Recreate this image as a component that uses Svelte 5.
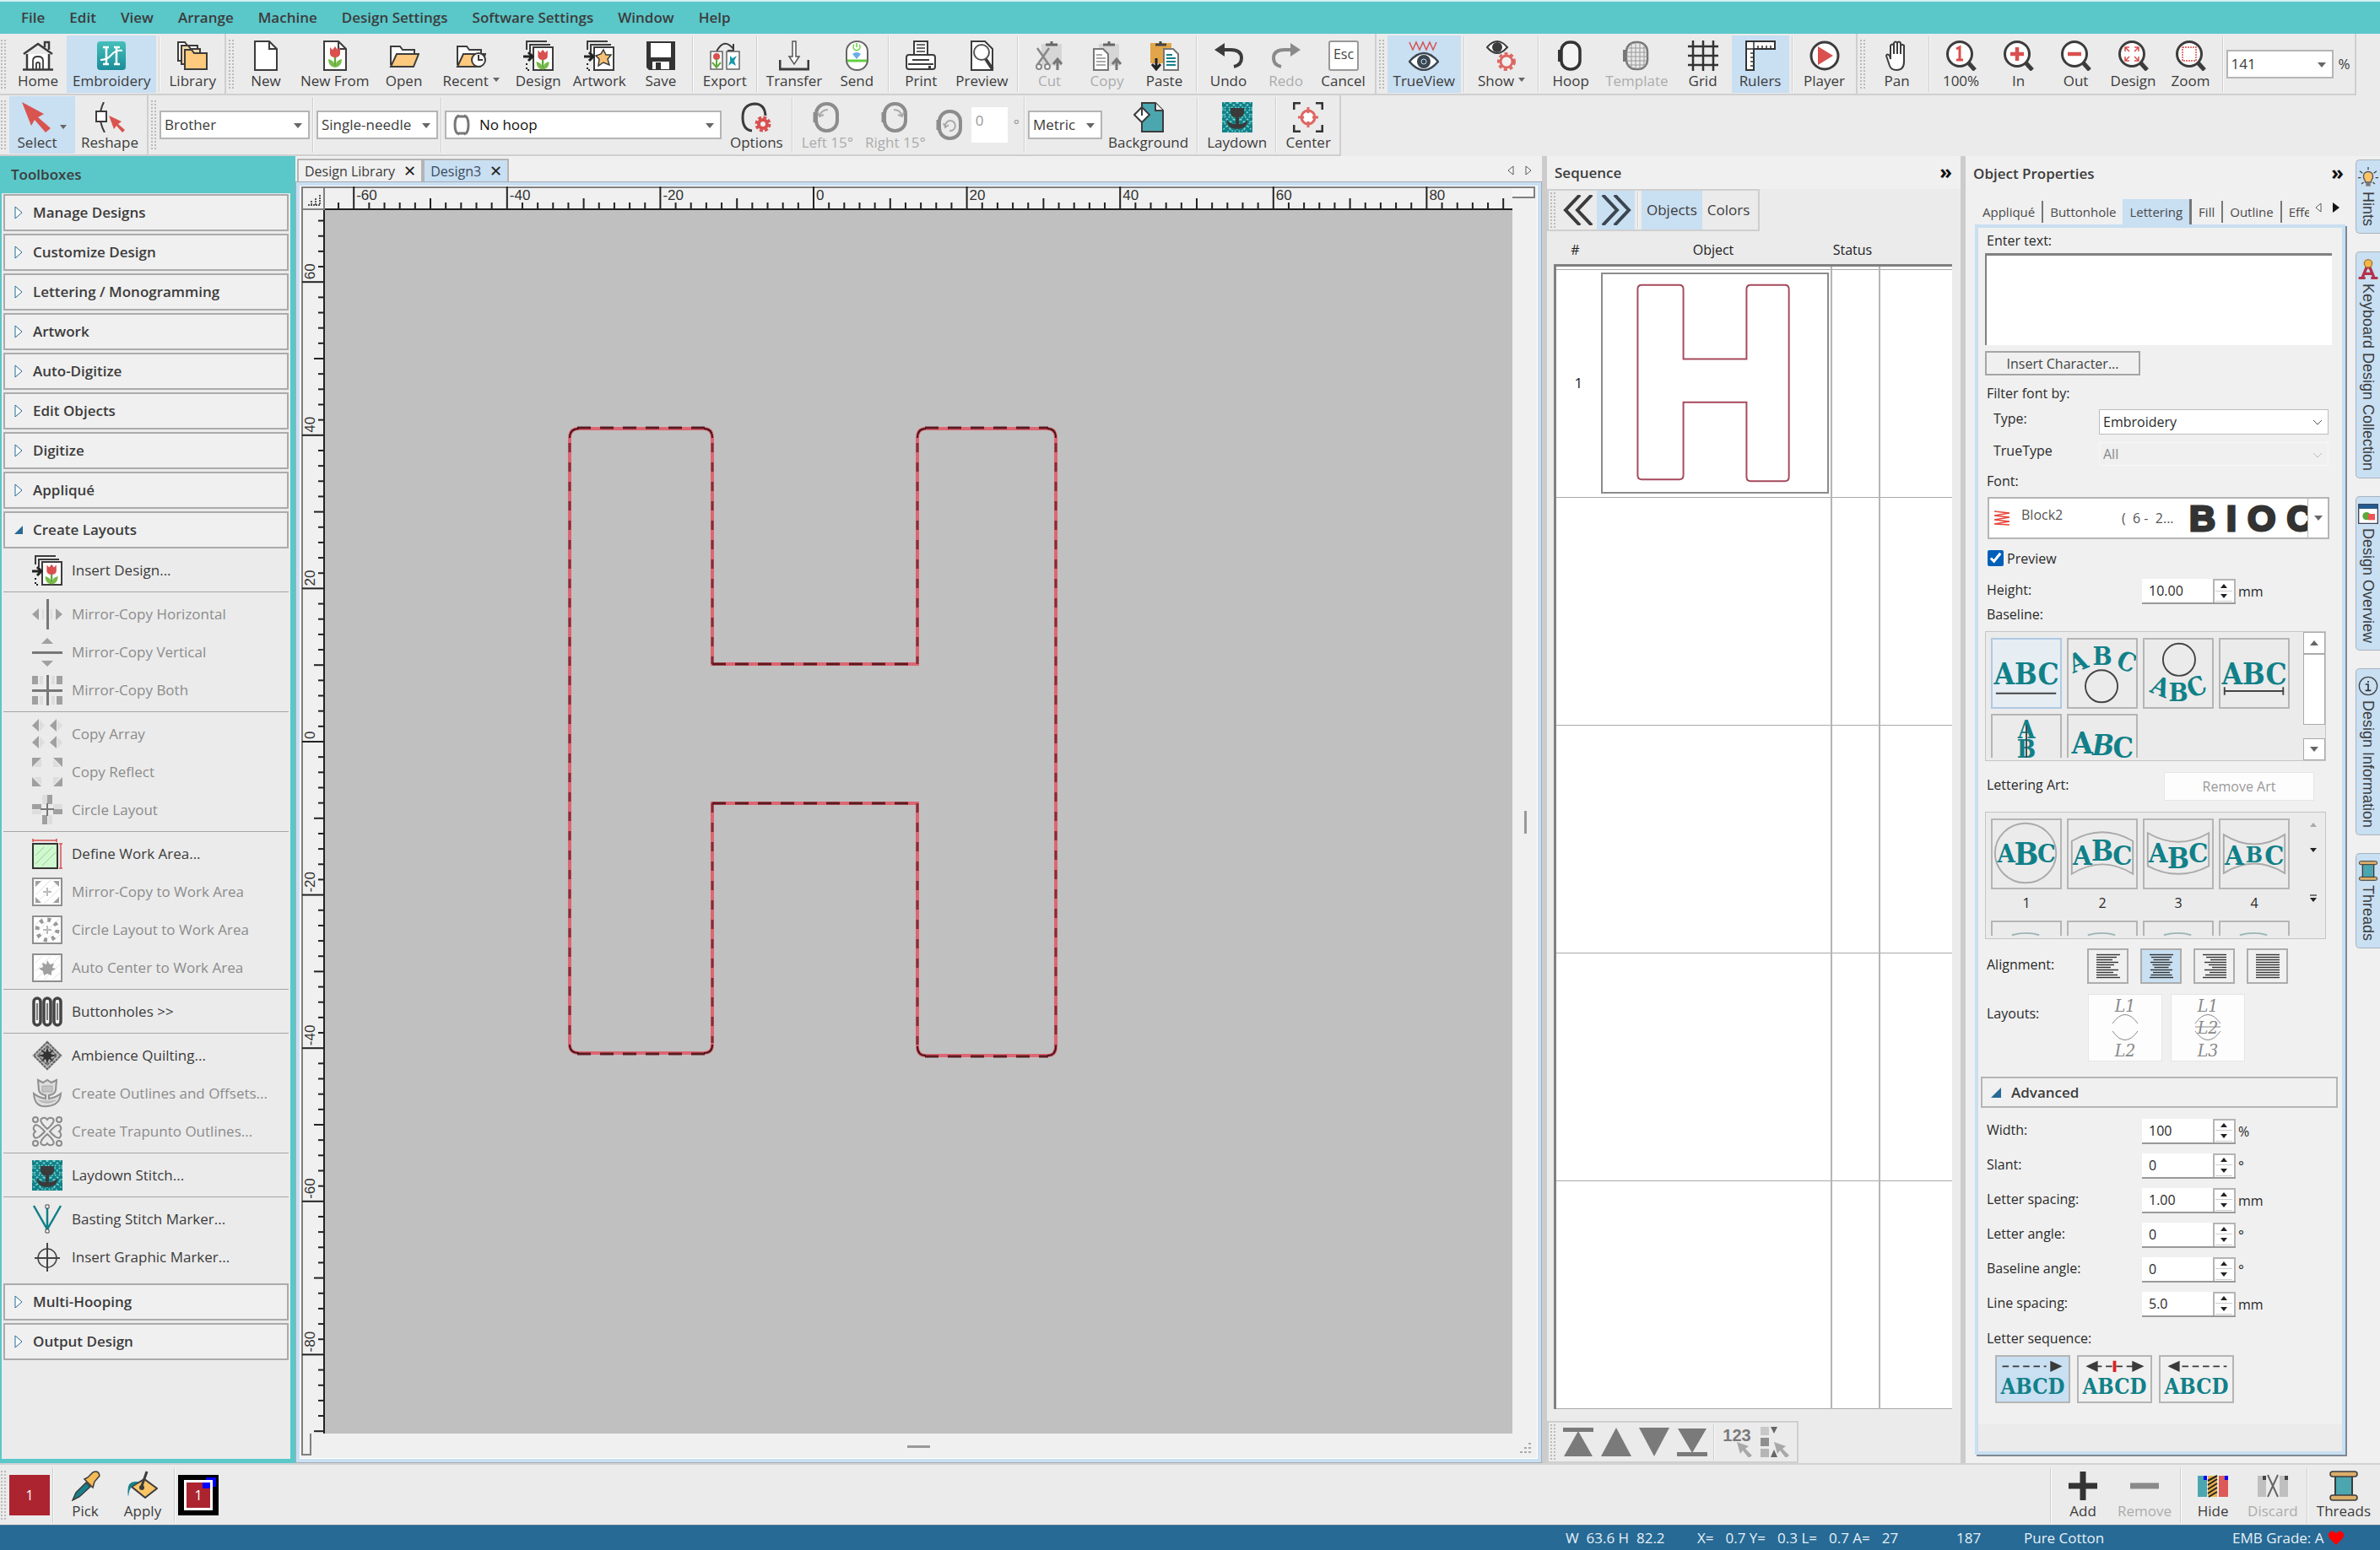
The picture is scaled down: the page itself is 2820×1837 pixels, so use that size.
<script>
    const tulip = `<path d="M18 18v13" stroke="#5fa83c" stroke-width="2.5"/><path d="M10 22q7 1 8 9q1-8 8-9q0 9-8 10q-8-1-8-10" fill="#78bb4a"/><path d="M12 8l3 3 3-4 3 4 3-3v8q-1 4-6 4t-6-4z" fill="#d9504f"/>`;
    const sheets = `<path d="M4 11V1h24M8 14V5h24" fill="none" stroke="#3c3c3c" stroke-width="2"/><rect x="12" y="8" width="23" height="27" fill="#fff" stroke="#3c3c3c" stroke-width="2"/><path d="M0 19h9M6 14l5 5-5 5" fill="none" stroke="#222" stroke-width="3"/><path d="M4 27v2M4 32v3h4" stroke="#222" fill="none" stroke-width="2" stroke-dasharray="2 2"/>`;
    const lens = `<path d="M25 25l9 10" stroke="#3c3c3c" stroke-width="5"/><circle cx="16" cy="16" r="14.5" fill="#fff" stroke="#3c3c3c" stroke-width="3"/>`;
    const folder = `<path d="M2 29V7h11l3 4h14v5" fill="#fff" stroke="#3c3c3c" stroke-width="2"/><path d="M2 31L9 16h26l-6 15z" fill="#ffca7d" stroke="#3c3c3c" stroke-width="2"/>`;
    const laydown = `<rect width="36" height="36" fill="#118088"/><path d="M2 0L36 34M10 0l26 26M18 0l18 18M26 0l10 10M0 6l30 30M0 14l22 22M0 22l14 14M34 0L0 34M26 0L0 26M18 0L0 18M10 0L0 10M36 6L6 36M36 14L14 36M36 22L22 36" stroke="#7cd3ce" stroke-width="1.5" stroke-dasharray="2 2"/><path d="M10 7h16v6q-1 5-6 5v8q7 0 10-5q1 10-12 11q-13-1-12-11q3 5 10 5v-8q-5 0-6-5z" fill="#3a3a3a"/>`;
    const spool = `<path d="M8 6h20v24H8z" fill="#4ba6b0" stroke="#3c3c3c" stroke-width="2"/><rect x="2" y="1" width="32" height="6" rx="3" fill="#dcae6a" stroke="#3c3c3c" stroke-width="1.5"/><rect x="2" y="29" width="32" height="6" rx="3" fill="#dcae6a" stroke="#3c3c3c" stroke-width="1.5"/>`;
    const hoopGrey = `<rect x="5" y="2" width="25" height="32" rx="12" fill="none" stroke="#8c8c8c" stroke-width="4"/><path d="M4 12v12" stroke="#8c8c8c" stroke-width="5"/>`;
    const workArea = `<rect x="1" y="2" width="34" height="32" fill="#fff" stroke="#8f8f8f" stroke-width="2"/><path d="M4 32L33 4M4 22L22 4M4 12l8-8M14 32l19-18M24 32l9-8" stroke="#e2e2e2"/>`;
    const clip = (c) => `<path d="M8 4h24v26H8z" fill="${c}"/><path d="M13 5h14M20 1v4" stroke="#666" stroke-width="3"/>`;
    const doc = (c, x) => `<path d="M${x} 10h11l6 6v19H${x}z" fill="#fff" stroke="#777" stroke-width="2"/><path d="M${x + 3} 17h7M${x + 3} 21h11M${x + 3} 25h11M${x + 3} 29h11" stroke="${c}" stroke-width="2"/>`;
    const quad = (s) => `<g fill="#a0a0a0">${s}</g>`;

    const icons = {
        home: `<path d="M5 16h26v18H5z" fill="#fff"/><path d="M1 16L18 4l17 12M5 16v18M31 16v18M0 34.500h36M26 8V2h5v9" fill="none" stroke="#3c3c3c" stroke-width="2.5"/><path d="M12 34V24q0-5 6-5t6 5v10M16 34v-7q2-2 4 0v7" fill="none" stroke="#3c3c3c" stroke-width="1.800"/>`,
        embroidery: `<defs><linearGradient id="emb" x2="0" y2="1"><stop stop-color="#46c0ba"/><stop offset="1" stop-color="#1b8d99"/></linearGradient></defs><rect x="1" y="1" width="34" height="34" rx="4" fill="url(#emb)"/><path d="M8 8h7M12 8v20M8 28h7M21 8h7M24 8v20M21 28h7" stroke="#fff" stroke-width="2.500"/><path d="M5 23q8 0 13-6t13-5" stroke="#fff" stroke-width="2" fill="none"/>`,
        library: `<g stroke="#3c3c3c" stroke-width="2"><path d="M1 24V2h8l3 4h12v18z" fill="#fff"/><path d="M5 28V6h8l3 4h11v18z" fill="#f3dbae"/><path d="M9 34V11h8l3 4h15v19z" fill="#ffca7d"/></g>`,
        new: `<path d="M5 1h17l9 9v25H5z" fill="#fff" stroke="#3c3c3c" stroke-width="2"/><path d="M22 1v9h9" fill="none" stroke="#3c3c3c" stroke-width="2"/>`,
        newFrom: `<path d="M5 1h17l9 9v25H5z" fill="#fff" stroke="#3c3c3c" stroke-width="2"/><path d="M22 1v9h9" fill="none" stroke="#3c3c3c" stroke-width="2"/>${tulip}`,
        open: folder,
        recent: `${folder}<circle cx="27" cy="23" r="8" fill="#fff" stroke="#3c3c3c" stroke-width="2"/><path d="M27 17v6h5" fill="none" stroke="#3c3c3c" stroke-width="2"/>`,
        insertDesign: `${sheets}<g transform="translate(6 4) scale(.95)">${tulip}</g>`,
        insertArtwork: `${sheets}<path d="M23 11l3 6 6 0-4 5 2 7-7-3-6 4 1-8-4-4 6-2z" fill="#f6c176" stroke="#3c3c3c" stroke-width="1.500"/>`,
        save: `<path d="M1 1h34v34H4l-3-3z" fill="#333"/><path d="M6 3h24v17H6z" fill="#fff"/><path d="M8 25h20v9H8z" fill="#fff"/><path d="M12 26h6v8h-6z" fill="#333"/>`,
        export: `<path d="M8 13Q17-4 28 10M28 4v8h-7" fill="none" stroke="#3c3c3c" stroke-width="2"/><path d="M1 13h14v21H1zM20 13h15v21H20z" fill="#fff" stroke="#666" stroke-width="1.500"/><circle cx="8" cy="19" r="4" fill="#d9504f"/><path d="M3 26l5 6 5-6M8 22v9" stroke="#5fa83c" fill="none" stroke-width="2"/><path d="M24 18l3 3 5-3-3 6 2 6-5-3-4 3 2-6z" fill="#1c97ae"/>`,
        transfer: `<path d="M1 23v11h34V23" fill="none" stroke="#3c3c3c" stroke-width="3"/><path d="M16 1h4v18h4l-6 9-6-9h4z" fill="#fff" stroke="#555" stroke-width="1.500"/>`,
        send: `<rect x="6" y="1" width="25" height="34" rx="12" fill="#fff" stroke="#666" stroke-width="2"/><path d="M7 24h23" stroke="#62cf3f" stroke-width="3"/><path d="M18 3v5M15 5a4 4 0 1 0 6 0" stroke="#62cf3f" stroke-width="1.500" fill="none"/><path d="M13 16q5-4 10 0l-5 6z" fill="#6aaeea"/>`,
        print: `<path d="M10 17V1h16v16" fill="#fff" stroke="#3c3c3c" stroke-width="2"/><path d="M13 5h10M13 9h10M13 13h10" stroke="#3c3c3c" stroke-width="1.500"/><rect x="1" y="17" width="34" height="17" rx="3" fill="#fff" stroke="#3c3c3c" stroke-width="2"/><path d="M8 23h20M3 28h30" stroke="#3c3c3c" stroke-width="2"/><path d="M27 30h3v3h-3z" fill="#3c3c3c"/>`,
        preview: `<path d="M6 1h16l9 9v25H6z" fill="#fff" stroke="#3c3c3c" stroke-width="2"/><circle cx="18" cy="14" r="9" fill="#fff" stroke="#555" stroke-width="2"/><path d="M23 22l8 12" stroke="#3c3c3c" stroke-width="4"/>`,
        cut: `${clip('#d6d6d6')}<path d="M3 9l14 20M17 9L3 29" stroke="#888" stroke-width="2.500"/><circle cx="5" cy="31" r="3" fill="#fff" stroke="#888" stroke-width="2"/><circle cx="15" cy="31" r="3" fill="#fff" stroke="#888" stroke-width="2"/><path d="M27 35V23M22 28l5-6 5 6" fill="none" stroke="#777" stroke-width="3"/>`,
        copy: `${clip('#d6d6d6')}${doc('#aaa', 2)}<path d="M29 35V23M24 28l5-6 5 6" fill="none" stroke="#777" stroke-width="3"/>`,
        paste: `<path d="M1 3h25v24H1z" fill="#e2a54a"/><path d="M7 5h13M13 1v4" stroke="#444" stroke-width="3"/>${doc('#118088', 17)}<path d="M8 21v12M3 28l5 6 5-6" fill="none" stroke="#222" stroke-width="3"/>`,
        undo: `<path d="M8 11h12q13 0 13 10 0 8-9 10" fill="none" stroke="#3c3c3c" stroke-width="4"/><path d="M1 11l12-8v16z" fill="#3c3c3c"/>`,
        redo: `<path d="M28 11H16Q3 11 3 21q0 8 9 10" fill="none" stroke="#8a8a8a" stroke-width="4"/><path d="M35 11L23 3v16z" fill="#8a8a8a"/>`,
        esc: `<rect x="1" y="1" width="34" height="34" rx="2" fill="#fff" stroke="#999" stroke-width="2"/><text x="18" y="22" text-anchor="middle" font-size="16" font-family="Open Sans, sans-serif" fill="#444">Esc</text>`,
        trueview: `<path d="M1 2l4 9 4-9 4 9 4-9 4 9 4-9 4 9 4-9" fill="none" stroke="#d9504f" stroke-width="1.500"/><path d="M1 25q17-20 34 0q-17 20-34 0z" fill="#fff" stroke="#3a4650" stroke-width="2.500"/><circle cx="18" cy="25" r="8" fill="#3a4650"/><circle cx="18" cy="25" r="3" fill="none" stroke="#c9dff5"/>`,
        show: `<path d="M1 8q12-14 24 0q-12 14-24 0z" fill="#fff" stroke="#3c3c3c" stroke-width="2"/><circle cx="13" cy="8" r="6" fill="#3c3c3c"/><circle cx="24" cy="25" r="9.500" fill="none" stroke="#dd6763" stroke-width="3" stroke-dasharray="4 3"/><circle cx="24" cy="25" r="7" fill="#f0f0f0" stroke="#dd6763" stroke-width="3"/>`,
        hoop: `<rect x="7" y="2" width="22" height="32" rx="10" fill="#f4f4f4" stroke="#333" stroke-width="3.500"/><path d="M5 11v14" stroke="#333" stroke-width="4"/>`,
        template: `<rect x="6" y="2" width="25" height="32" rx="11" fill="#e8e8e8" stroke="#777" stroke-width="2.500"/><path d="M4 11v14" stroke="#777" stroke-width="4"/><path d="M12 3v30M17 2v32M22 2v32M27 4v28M7 9h23M6 14h25M6 19h25M6 24h25M7 29h23" stroke="#999"/>`,
        grid: `<path d="M6 0v36M18 0v36M30 0v36M0 7h36M0 18h36M0 29h36" stroke="#333" stroke-width="2.500"/>`,
        rulers: `<path d="M1 1h34v9H10v25H1z" fill="#fff" stroke="#333" stroke-width="2"/><path d="M1 10h9V1M15 10V6M20 10V6M25 10V6M30 10V6M10 15H6M10 20H6M10 25H6M10 30H6" fill="none" stroke="#333" stroke-width="1.500"/>`,
        player: `<circle cx="18" cy="18" r="16" fill="#fff" stroke="#3c3c3c" stroke-width="3"/><path d="M10 7l18 11-18 11z" fill="#d9504f"/>`,
        pan: `<path d="M10 22V6q2-3 4 0v10V3q2-3 4 0v13V3q2-3 4 0v13V6q2-2 4 0v19q0 10-9 10-6 0-8-5L5 18q1-3 4 0z" fill="#fff" stroke="#3c3c3c" stroke-width="2"/>`,
        zoom100: `${lens}<path d="M12 10l4-2v15M12 23h8" fill="none" stroke="#d9504f" stroke-width="3"/>`,
        zoomIn: `${lens}<path d="M8 16h16M16 8v16" stroke="#d9504f" stroke-width="4.500"/>`,
        zoomOut: `${lens}<path d="M8 16h16" stroke="#d9504f" stroke-width="4.500"/>`,
        zoomDesign: `${lens}<path d="M8 13V8h5M8 8l5 5M19 8h5v5M24 8l-5 5M8 19v5h5M8 24l5-5M24 19v5h-5M24 24l-5-5" fill="none" stroke="#d9504f" stroke-width="1.500"/>`,
        zoomBox: `${lens}<path d="M8 8h16v16H8z" fill="none" stroke="#d9504f" stroke-width="1.500" stroke-dasharray="2 1"/>`,
        select: `<path d="M0 0l26 14-7 4 15 13-6 5-13-15-4 7z" fill="#d9534f"/>`,
        reshape: `<path d="M11 0Q2 18 12 36" fill="none" stroke="#3c3c3c" stroke-width="2"/><path d="M2 11h12v12H2z" fill="#fff" stroke="#3c3c3c" stroke-width="2"/><path d="M17 16l15 7-4 3 8 7-3 3-7-8-3 4z" fill="#d9534f"/>`,
        options: `<path d="M13 34Q2 33 2 18T16 2q12 0 13 14" fill="none" stroke="#3c3c3c" stroke-width="3"/><circle cx="26" cy="26" r="8" fill="none" stroke="#d9504f" stroke-width="3" stroke-dasharray="4 2.300"/><circle cx="26" cy="26" r="5" fill="#f0f0f0" stroke="#d9504f" stroke-width="4"/>`,
        left15: `${hoopGrey}<path d="M9 17q2-8 10-8M7 12l2 5 5-2" fill="none" stroke="#aaa" stroke-width="2"/>`,
        right15: `${hoopGrey}<path d="M26 17q-2-8-10-8M28 12l-2 5-5-2" fill="none" stroke="#aaa" stroke-width="2"/>`,
        rotate: `${hoopGrey}<path d="M12 20a6 6 0 1 1 5 5M10 16l2 5 4-3" fill="none" stroke="#aaa" stroke-width="2"/>`,
        background: `<path d="M10 1h16l9 9v25H10z" fill="#4ba6b0" stroke="#3c3c3c" stroke-width="2"/><path d="M26 1v9h9" fill="#fff" stroke="#3c3c3c" stroke-width="2"/><path d="M10 6l9 9-9 9-9-9z" fill="#fff" stroke="#3c3c3c" stroke-width="2"/><path d="M10 1v15" stroke="#3c3c3c" stroke-width="2"/>`,
        laydown,
        center: `<path d="M1 9V1h8M27 1h8v8M35 27v8h-8M9 35H1v-8" fill="none" stroke="#333" stroke-width="3"/><circle cx="18" cy="18" r="8" fill="#fff" stroke="#dd6763" stroke-width="3"/><path d="M18 6v24M6 18h24" stroke="#dd6763" stroke-width="3"/><circle cx="18" cy="18" r="5" fill="#fff"/>`,
        mirrorH: quad(`<path d="M8 11v14L0 18z"/><path d="M28 11v14l8-7z"/><path d="M12 12h2v12h-2zM22 12h2v12h-2z" fill="#ddd"/><path d="M17 0h3v36h-3z" fill="#777"/>`),
        mirrorV: quad(`<path d="M11 8h14L18 1z"/><path d="M11 28h14l-7 7z"/><path d="M0 17h36v3H0z" fill="#777"/>`),
        mirrorBoth: quad(`<path d="M0 1h7v10H0zM29 1h7v10h-7zM0 25h7v10H0zM29 25h7v10h-7z"/><path d="M9 1h4v10H9zM23 1h4v10h-4zM9 25h4v10H9zM23 25h4v10h-4z" fill="#ddd"/><path d="M17 0h3v36h-3zM0 17h36v3H0z" fill="#777"/>`),
        copyArray: quad(`<path d="M8 0v15L0 8zM29 0v15L21 8zM8 20v15l-8-7zM29 20v15l-8-7z"/><path d="M9 1v14l6-7zM30 1v14l6-7zM9 21v14l6-7zM30 21v14l6-7z" fill="#ddd"/>`),
        copyReflect: quad(`<path d="M0 1h11L0 12zM25 1h11v11zM0 24l11 11H0zM36 24v11H25z"/><path d="M11 1v11H2zM25 3v9h9zM2 24h9v9zM25 24h9l-9 9z" fill="#ddd"/>`),
        circleLayout: quad(`<path d="M18 0h6v11h-6zM0 11h11v6H0zM25 17h11v6H25zM12 24h6v11h-6z"/><path d="M12 0h6v11h-6zM0 18h11v5H0zM25 11h11v6H25zM19 24h5v11h-5z" fill="#ddd"/><path d="M10 17h16M18 10v15" stroke="#777" stroke-width="2"/>`),
        workDefine: `<path d="M1 6h29v29H1z" fill="#cff8cf" stroke="#333" stroke-width="2"/><path d="M4 30l20-20M4 20l10-10M12 32l16-16" stroke="#9ccf9c"/><path d="M1 2h28M1 0v4M29 0v4M34 6v29M32 6h4M32 35h4" stroke="#d9504f" stroke-width="1.500"/>`,
        workMirror: `${workArea}${quad('<path d="M4 5h7l-7 7zM25 5h7v7zM4 24l7 7H4zM32 24v7h-7z"/><path d="M13 18h10M18 13v10" stroke="#bbb" stroke-width="2"/>')}`,
        workCircle: `${workArea}<circle cx="18" cy="18" r="12" fill="none" stroke="#999" stroke-width="5" stroke-dasharray="4 5.400"/><path d="M13 18h10M18 13v10" stroke="#bbb" stroke-width="2"/>`,
        workCenter: `${workArea}${quad('<path d="M18 9l3 5 5-1-2 5 4 1-5 3 0 5-5-2-4 2-1-5-5-3 5-2-1-5 5 2z"/>')}`,
        buttonholes: [1, 13, 25].map((x) => `<rect x="${x + 1}" y="2" width="8" height="32" rx="4" fill="#f4f4f4" stroke="#444" stroke-width="3.500"/><path d="M${x + 5} 8v20" stroke="#555" stroke-width="1.500"/>`).join(''),
        ambience: `<path d="M18 0l18 18-18 18L0 18z" fill="#b5b5b5"/><path d="M18 2l16 16-16 16L2 18zM18 7l11 11-11 11L7 18z" fill="none" stroke="#555" stroke-width="1.500" stroke-dasharray="3 1"/><path d="M18 8l2 6 6-4-4 6 7 2-7 2 4 6-6-4-2 6-2-6-6 4 4-6-7-2 7-2-4-6 6 4z" fill="#333"/>`,
        outlines: `<path d="M7 2l6 3 5-3 5 3 6-3-1 12q-1 5-8 6v4q8-1 14-6-1 14-16 15Q3 35 2 18q6 5 14 6v-4q-7-1-8-6z" fill="#ddd" stroke="#909090" stroke-width="2"/><path d="M12 9h12v7H12zM8 26q9 6 20 0" fill="#c4c4c4" stroke="#aaa"/>`,
        trapunto: `<g fill="none" stroke="#8a8a8a" stroke-width="2"><path d="M18 15Q8 6 11 3q4-3 7 1 3-4 7-1 3 3-7 12zM18 21q-10 9-7 12 4 3 7-1 3 4 7 1 3-3-7-12zM15 18Q6 8 3 11q-3 4 1 7-4 3-1 7 3 3 12-7zM21 18q9-10 12-7 3 4-1 7 4 3 1 7-3 3-12-7z"/><circle cx="4" cy="4" r="3"/><circle cx="32" cy="4" r="3"/><circle cx="4" cy="32" r="3"/><circle cx="32" cy="32" r="3"/></g>`,
        basting: `<path d="M2 2l16 28L34 2M18 4v28" fill="none" stroke="#118088" stroke-width="2.500"/><path d="M16 1h4v4h-4zM16 30h4v4h-4z" fill="#fff" stroke="#444"/>`,
        marker: `<circle cx="18" cy="19" r="11" fill="none" stroke="#444" stroke-width="1.500"/><path d="M18 1v34M3 19h30" stroke="#444" stroke-width="2"/>`,
        pick: `<path d="M3 35l4-9 12-12 5 5-13 12z" fill="#18808a" stroke="#3c3c3c" stroke-width="1.500"/><path d="M17 10l4-2 6-6q7-3 8 4l-6 7-2 7z" fill="#f3bc56" stroke="#3c3c3c" stroke-width="1.500"/>`,
        apply: `<path d="M5 19l15-9 15 11-14 11z" fill="#f9c566" stroke="#3c3c3c" stroke-width="2"/><path d="M17 18L23 1" stroke="#3c3c3c" stroke-width="3"/><circle cx="17" cy="20" r="3" fill="#3c3c3c"/><path d="M9 13q-11 0-8 18 1-10 5-13l8-5z" fill="#18808a"/>`,
        add: `<path d="M1 18h34M18 1v34" stroke="#333" stroke-width="7"/>`,
        remove: `<path d="M1 18h34" stroke="#8a8a8a" stroke-width="7"/>`,
        hide: `<path d="M0 6h11v25H0z" fill="#4ba6b0"/><path d="M12 6h11v25H12z" fill="#eab04a"/><path d="M12 12l11-6M12 17l11-7M12 22l11-7M12 27l11-7M13 31l10-6" stroke="#222" stroke-width="2"/><path d="M25 6h11v25H25z" fill="#dd5a58"/><path d="M7 6h4v5H7zM32 6h4v5h-4z" fill="#00f"/>`,
        discard: `<path d="M0 6h10v25H0zM26 6h10v25H26z" fill="#bfbfbf"/><path d="M12 5l12 26M24 5L12 31" stroke="#666" stroke-width="2"/><path d="M6 6h4v5H6zM32 6h4v5h-4z" fill="#444"/>`,
        spool,
        back: `<path d="M20 0L3 18l17 18M34 0L17 18l17 18" fill="none" stroke="#3c3c3c" stroke-width="4"/>`,
        forward: `<path d="M2 0l17 18L2 36M16 0l17 18-17 18" fill="none" stroke="#3c4650" stroke-width="4"/>`,
        first: `<path d="M0 1h36v5H0zM18 5l17 30H1z" fill="#7a7a7a"/>`,
        up: `<path d="M18 1l18 34H0z" fill="#7a7a7a"/>`,
        down: `<path d="M18 35L36 1H0z" fill="#7a7a7a"/>`,
        last: `<path d="M0 30h36v5H0zM18 31L1 2h34z" fill="#7a7a7a"/>`,
        byNumber: `<text x="18" y="17" text-anchor="middle" font-size="20" font-weight="700" font-family="Liberation Sans, sans-serif" fill="#7a7a7a">123</text><path d="M18 18l14 5-4 3 8 8-4 3-7-9-3 4z" fill="#a8a8a8"/>`,
        byBlock: `<path d="M1 0h10v10H1z" fill="#c8c8c8"/><path d="M1 13h10v10H1z" fill="#8f8f8f"/><path d="M1 26h10v10H1z" fill="#b5b5b5"/><path d="M13 0h8l-4 8zM13 36h8l-4-9z" fill="#666"/><path d="M17 18l14 5-4 3 8 8-4 3-7-9-3 4z" fill="#a8a8a8"/>`,
        bulb: `<path d="M18 0v5M3 7l5 4M33 7l-5 4M0 19h5M31 19h5M6 30l4-3M30 30l-4-3" stroke="#444" stroke-width="2"/><path d="M13 27q0-4-3-7-2-11 8-12 10 1 8 12-3 3-3 7z" fill="#ffc468" stroke="#555" stroke-width="2"/><path d="M14 28h8v6h-8z" fill="#777"/>`,
        letterA: `<path d="M1 34h12M23 34h12M8 32l7-17h6l7 17M12 26h12" fill="none" stroke="#b4314a" stroke-width="5"/><circle cx="18" cy="8" r="7" fill="#f3b64c" stroke="#a5752a" stroke-width="2"/>`,
        overview: `<path d="M1 1h34v34H1z" fill="#fff" stroke="#445" stroke-width="2"/><path d="M1 1h34v8H1z" fill="#24598c"/><circle cx="15" cy="22" r="7" fill="#5fa83c"/><path d="M18 18h12v11H18z" fill="#e55"/>`,
        info: `<circle cx="18" cy="18" r="16" fill="none" stroke="#444" stroke-width="2"/><path d="M18 9v3M13 15h5v11M13 26h10" fill="none" stroke="#333" stroke-width="2.500"/>`,
    };

    const menu = ['File', 'Edit', 'View', 'Arrange', 'Machine', 'Design Settings', 'Software Settings', 'Window', 'Help'];

    const mainBars = [
        [
            { icon: 'home', label: 'Home' },
            { icon: 'embroidery', label: 'Embroidery', on: true },
            null,
            { icon: 'library', label: 'Library' },
        ],
        [
            { icon: 'new', label: 'New' },
            { icon: 'newFrom', label: 'New From' },
            { icon: 'open', label: 'Open' },
            { icon: 'recent', label: 'Recent', more: true },
            { icon: 'insertDesign', label: 'Design' },
            { icon: 'insertArtwork', label: 'Artwork' },
            { icon: 'save', label: 'Save' },
            null,
            { icon: 'export', label: 'Export' },
            null,
            { icon: 'transfer', label: 'Transfer' },
            { icon: 'send', label: 'Send' },
            null,
            { icon: 'print', label: 'Print' },
            { icon: 'preview', label: 'Preview' },
            null,
            { icon: 'cut', label: 'Cut', off: true },
            { icon: 'copy', label: 'Copy', off: true },
            { icon: 'paste', label: 'Paste' },
            null,
            { icon: 'undo', label: 'Undo' },
            { icon: 'redo', label: 'Redo', off: true },
            { icon: 'esc', label: 'Cancel' },
        ],
        [
            { icon: 'trueview', label: 'TrueView', on: true },
            null,
            { icon: 'show', label: 'Show', more: true },
            null,
            { icon: 'hoop', label: 'Hoop' },
            { icon: 'template', label: 'Template', off: true },
            { icon: 'grid', label: 'Grid' },
            { icon: 'rulers', label: 'Rulers', on: true },
            null,
            { icon: 'player', label: 'Player' },
        ],
    ];

    const zoomBar = [
        { icon: 'pan', label: 'Pan' },
        null,
        { icon: 'zoom100', label: '100%' },
        { icon: 'zoomIn', label: 'In' },
        { icon: 'zoomOut', label: 'Out' },
        { icon: 'zoomDesign', label: 'Design' },
        { icon: 'zoomBox', label: 'Zoom' },
        null,
    ];

    const toolboxes = ['Manage Designs', 'Customize Design', 'Lettering / Monogramming', 'Artwork', 'Auto-Digitize', 'Edit Objects', 'Digitize', 'Appliqué'];

    const layoutTools = [
        [{ icon: 'insertDesign', label: 'Insert Design...' }],
        [
            { icon: 'mirrorH', label: 'Mirror-Copy Horizontal', off: true },
            { icon: 'mirrorV', label: 'Mirror-Copy Vertical', off: true },
            { icon: 'mirrorBoth', label: 'Mirror-Copy Both', off: true },
        ],
        [
            { icon: 'copyArray', label: 'Copy Array', off: true },
            { icon: 'copyReflect', label: 'Copy Reflect', off: true },
            { icon: 'circleLayout', label: 'Circle Layout', off: true },
        ],
        [
            { icon: 'workDefine', label: 'Define Work Area...' },
            { icon: 'workMirror', label: 'Mirror-Copy to Work Area', off: true },
            { icon: 'workCircle', label: 'Circle Layout to Work Area', off: true },
            { icon: 'workCenter', label: 'Auto Center to Work Area', off: true },
        ],
        [{ icon: 'buttonholes', label: 'Buttonholes >>' }],
        [
            { icon: 'ambience', label: 'Ambience Quilting...' },
            { icon: 'outlines', label: 'Create Outlines and Offsets...', off: true },
            { icon: 'trapunto', label: 'Create Trapunto Outlines...', off: true },
        ],
        [{ icon: 'laydown', label: 'Laydown Stitch...' }],
        [
            { icon: 'basting', label: 'Basting Stitch Marker...' },
            { icon: 'marker', label: 'Insert Graphic Marker...' },
        ],
    ];

    // rulers: 9.08px per mm, a tick every 2mm
    const scale = 9.08;
    const originX = 607;
    const originY = 658;
    const ticks = (from, to) => {
        const list = [];
        for (let mm = from; mm <= to; mm += 2) list.push(mm);
        return list;
    };
    const tickSize = (mm) => (mm % 20 === 0 ? 27 : mm % 10 === 0 ? 13 : 8);
    const xTicks = ticks(-62, 90);
    const yTicks = ticks(-90, 68);

    const spinners = [
        { id: 'width', label: 'Width:', value: '100', unit: '%' },
        { id: 'slant', label: 'Slant:', value: '0', unit: '°' },
        { id: 'letter-spacing', label: 'Letter spacing:', value: '1.00', unit: 'mm' },
        { id: 'letter-angle', label: 'Letter angle:', value: '0', unit: '°' },
        { id: 'baseline-angle', label: 'Baseline angle:', value: '0', unit: '°' },
        { id: 'line-spacing', label: 'Line spacing:', value: '5.0', unit: 'mm' },
    ];

    const slab = (x, y, t, size = 37, extra = '') =>
        `<text x="${x}" y="${y}" font-size="${size}" text-anchor="middle" ${extra}>${t}</text>`;

    const baselines = [
        `${slab(42, 56, 'ABC')}<path d="M4 67h75" stroke="#444" stroke-width="2"/>`,
        `${slab(16, 38, 'A', 32, 'transform="rotate(-22 16 38)"')}${slab(42, 31, 'B', 32)}${slab(68, 38, 'C', 32, 'transform="rotate(22 68 38)"')}<circle cx="41" cy="58" r="20" fill="none" stroke="#444" stroke-width="2"/>`,
        `<circle cx="43" cy="25" r="20" fill="none" stroke="#444" stroke-width="2"/>${slab(16, 69, 'A', 32, 'transform="rotate(22 16 69)"')}${slab(42, 77, 'B', 32)}${slab(69, 69, 'C', 32, 'transform="rotate(-22 69 69)"')}`,
        `${slab(42, 56, 'ABC')}<path d="M4 64h75M5 59v10M78 59v10" stroke="#444" stroke-width="2"/>`,
        `${slab(42, 28, 'A', 31)}${slab(42, 53, 'B', 31)}<path d="M42 12v70" stroke="#444" stroke-width="2"/>`,
        `${slab(17, 47, 'A', 38)}${slab(43, 49, 'B', 36, 'font-style="italic"')}${slab(68, 52, 'C', 36)}`,
    ];

    const arts = [
        `<ellipse cx="41" cy="41" rx="38" ry="37" fill="none" stroke="#aaa" stroke-width="2"/>${slab(17, 53, 'A', 32)}${slab(42, 56, 'B', 40)}${slab(67, 53, 'C', 32)}`,
        `<path d="M4 26q38-22 76 0v41q-38-24-76 0z" fill="none" stroke="#aaa" stroke-width="2"/>${slab(17, 56, 'A', 34)}${slab(42, 50, 'B', 36)}${slab(67, 56, 'C', 34)}`,
        `<path d="M4 16q38 22 76 0v41q-38 20-76 0z" fill="none" stroke="#aaa" stroke-width="2"/>${slab(17, 53, 'A', 34)}${slab(42, 60, 'B', 36)}${slab(67, 53, 'C', 34)}`,
        `<path d="M4 18q38 24 76 0v48q-38-24-76 0z" fill="none" stroke="#aaa" stroke-width="2"/>${slab(17, 56, 'A', 34)}${slab(42, 52, 'B', 28)}${slab(67, 56, 'C', 34)}`,
    ];

    const ragged = [28, 24, 19, 26, 21, 17, 26, 20, 25, 28];
    const aligns = ['left', 'center', 'right', 'full'];
    const lineX = (kind, w) => (kind === 'left' || kind === 'full' ? 0 : kind === 'right' ? 28 - w : (28 - w) / 2);
    const lineW = (kind, w) => (kind === 'full' ? 28 : w);

    const sequences = [
        `<path d="M6 12h55" stroke-dasharray="8 5"/><path d="M66 5l15 7-15 7z" fill="#3a3a3a" stroke="none"/>`,
        `<path d="M20 12h50" stroke-dasharray="8 5"/><path d="M23 5L8 12l15 7zM66 5l15 7-15 7z" fill="#3a3a3a" stroke="none"/><path d="M44 5v14" stroke="#e02020" stroke-width="4"/>`,
        `<path d="M26 12h56" stroke-dasharray="8 5"/><path d="M23 5L8 12l15 7z" fill="#3a3a3a" stroke="none"/>`,
    ];

    const dock = [
        { icon: 'bulb', label: 'Hints' },
        { icon: 'letterA', label: 'Keyboard Design Collection' },
        { icon: 'overview', label: 'Design Overview' },
        { icon: 'info', label: 'Design Information' },
        { icon: 'spool', label: 'Threads' },
    ];
</script>

{#snippet icon(name)}
    <svg class="icon" viewBox="0 0 36 36" aria-hidden="true">{@html icons[name]}</svg>
{/snippet}

{#snippet tools(items)}
    {#each items as item}
        {#if item}
            <button class="tool" class:on={item.on} class:off={item.off} class:more={item.more} disabled={item.off}>
                {@render icon(item.icon)}
                <span class="tool-label">{item.label}{#if item.more}<i class="caret small"></i>{/if}</span>
            </button>
        {:else}
            <span class="sep"></span>
        {/if}
    {/each}
{/snippet}

{#snippet spinner(id, value, unit)}
    <span class="spinner">
        <input {id} type="text" {value} />
        <span class="spin-buttons">
            <button aria-label="Increase"><svg viewBox="0 0 8 5"><path d="M0 5l4-5 4 5z" /></svg></button>
            <button aria-label="Decrease"><svg viewBox="0 0 8 5"><path d="M0 0l4 5 4-5z" /></svg></button>
        </span>
    </span>
    <span class="unit">{unit}</span>
{/snippet}

<div class="window">
    <nav class="menu">
        {#each menu as entry}
            <button>{entry}</button>
        {/each}
    </nav>

    <div class="toolbar-row main-row">
        {#each mainBars as bar}
            <div class="toolbar">
                <span class="grip"></span>
                {@render tools(bar)}
            </div>
        {/each}
        <div class="toolbar">
            <span class="grip"></span>
            {@render tools(zoomBar)}
            <div class="combo zoom-combo">
                <select aria-label="Zoom"><option>141</option></select>
            </div>
            <span class="percent">%</span>
        </div>
    </div>

    <div class="toolbar-row">
        <div class="toolbar">
            <span class="grip"></span>
            <button class="tool on split">
                <span class="split-main">
                    {@render icon('select')}
                    <span class="tool-label">Select</span>
                </span>
                <i class="caret small"></i>
            </button>
            {@render tools([{ icon: 'reshape', label: 'Reshape' }])}
        </div>
        <div class="toolbar">
            <span class="grip"></span>
            <div class="combo brand"><select aria-label="Machine brand"><option>Brother</option></select></div>
            <span class="sep"></span>
            <div class="combo needle"><select aria-label="Machine type"><option>Single-needle</option></select></div>
            <span class="sep"></span>
            <div class="combo hoop-combo">
                <svg class="hoop-glyph" viewBox="0 0 22 26"><path d="M8 2Q3 3 3 13t5 11M14 2q5 1 5 11t-5 11M7 3h8M7 23h8" fill="none" stroke="#777" stroke-width="3" /></svg>
                <select aria-label="Hoop"><option>No hoop</option></select>
            </div>
            {@render tools([
                { icon: 'options', label: 'Options' },
                null,
                { icon: 'left15', label: 'Left 15°', off: true },
                { icon: 'right15', label: 'Right 15°', off: true },
            ])}
            <label class="rotate">
                {@render icon('rotate')}
                <input type="text" value="0" disabled aria-label="Rotation" />
                <span>°</span>
            </label>
            <span class="sep"></span>
            <div class="combo metric"><select aria-label="Units"><option>Metric</option></select></div>
            {@render tools([{ icon: 'background', label: 'Background' }, null, { icon: 'laydown', label: 'Laydown' }, null, { icon: 'center', label: 'Center' }])}
        </div>
    </div>

    <main>
        <aside class="toolboxes">
            <h2>Toolboxes</h2>
            <div class="toolbox-list">
                {#each toolboxes as name}
                    <button class="category"><svg viewBox="0 0 10 16"><path d="M1 1l8 7-8 7z" fill="#fff" stroke="#266a95" /></svg>{name}</button>
                {/each}
                <button class="category"><svg viewBox="0 0 10 16"><path d="M10 3v10H0z" fill="#266a95" /></svg>Create Layouts</button>
                <div class="layout-tools">
                    {#each layoutTools as group}
                        <div class="tool-group">
                            {#each group as tool}
                                <button class:off={tool.off} disabled={tool.off}>{@render icon(tool.icon)}{tool.label}</button>
                            {/each}
                        </div>
                    {/each}
                </div>
                <button class="category"><svg viewBox="0 0 10 16"><path d="M1 1l8 7-8 7z" fill="#fff" stroke="#266a95" /></svg>Multi-Hooping</button>
                <button class="category"><svg viewBox="0 0 10 16"><path d="M1 1l8 7-8 7z" fill="#fff" stroke="#266a95" /></svg>Output Design</button>
            </div>
        </aside>

        <section class="workspace">
            <div class="doc-tabs">
                <button class="doc-tab">Design Library <span class="close">✕</span></button>
                <button class="doc-tab active">Design3 <span class="close">✕</span></button>
                <span class="tab-scroll">
                    <svg viewBox="0 0 8 12"><path d="M7 1L1 6l6 5z" /></svg>
                    <svg viewBox="0 0 8 12"><path d="M1 1l6 5-6 5z" /></svg>
                </span>
            </div>
            <div class="doc-frame">
                <svg class="ruler-corner" viewBox="0 0 28 28">
                    <path d="M8 22h14v-12M12 22v-5M17 22v-9" fill="none" stroke="#555" stroke-width="2" stroke-dasharray="2 1" />
                    <path d="M1 28V1h27M27 0v28M0 27h28" fill="none" stroke="#808080" stroke-width="2" />
                </svg>
                <svg class="ruler-x">
                    <path d="M0 1h2000" stroke="#808080" stroke-width="2" />
                    {#each xTicks as mm}
                        <line x1={originX - 28 + mm * scale} x2={originX - 28 + mm * scale} y1={27 - tickSize(mm)} y2="27" />
                        {#if mm % 20 === 0}
                            <text x={originX - 25 + mm * scale} y="16">{mm}</text>
                        {/if}
                    {/each}
                    <path d="M0 27h2000" stroke="#222" stroke-width="2" />
                </svg>
                <svg class="corner-mark" viewBox="0 0 28 28"><path d="M0 13h26V1H0" fill="#f5f5f5" stroke="#808080" stroke-width="2" /></svg>
                <svg class="ruler-y">
                    <path d="M1 0v2000" stroke="#808080" stroke-width="2" />
                    {#each yTicks as mm}
                        <line x1={28 - tickSize(mm)} x2="28" y1={originY - 28 - mm * scale} y2={originY - 28 - mm * scale} />
                        {#if mm % 20 === 0}
                            <text transform={`translate(16 ${originY - 31 - mm * scale}) rotate(-90)`}>{mm}</text>
                        {/if}
                    {/each}
                    <path d="M27 0v2000" stroke="#222" stroke-width="2" />
                </svg>
                <svg class="canvas">
                    <g fill="none" transform="translate(-385 -249)">
                        <path d="M675 519Q675 508 686 508H834Q844 508 844 519V787H1087V519Q1087 508 1097 508H1241Q1251 508 1251 519V1240Q1251 1251 1241 1251H1097Q1087 1251 1087 1240V952H844V1238Q844 1248 834 1248H686Q675 1248 675 1238Z" stroke="#dd6672" stroke-width="4" />
                        <path d="M675 525V1234M844 525V787M844 952V1236M1087 525V787M1087 952V1238M1251 525V1240" stroke="#842c37" stroke-width="3" stroke-dasharray="11 12" />
                        <path d="M684 507H836M1096 507H1242M844 787H1087M844 952H1087M684 1249H836M1096 1252H1242" stroke="#5c1a22" stroke-width="3" stroke-dasharray="16 11" />
                        <path d="M675 519Q675 508 686 508M834 508Q844 508 844 519M1087 519Q1087 508 1097 508M1241 508Q1251 508 1251 519M1251 1240Q1251 1251 1241 1251M1097 1251Q1087 1251 1087 1240M844 1238Q844 1248 834 1248M686 1248Q675 1248 675 1238" stroke="#4a141b" stroke-width="2" />
                    </g>
                </svg>
                <span class="edge-right"><i></i></span>
                <svg class="corner-mark" viewBox="0 0 28 28"><path d="M1 0v25h10V0" fill="none" stroke="#808080" stroke-width="2" /></svg>
                <span class="edge-bottom"><i></i></span>
                <svg class="corner-mark" viewBox="0 0 28 28"><path d="M9 22h3M14 22h3M19 22h3M14 17h3M19 17h3M19 12h3" stroke="#aaa" stroke-width="2" /></svg>
            </div>
        </section>

        <section class="sequence">
            <header><h2>Sequence</h2><button class="chevron" aria-label="Collapse">»</button></header>
            <div class="seq-bar">
                <span class="grip"></span>
                <button class="seq-icon" aria-label="Previous">{@render icon('back')}</button>
                <button class="seq-icon on" aria-label="Next">{@render icon('forward')}</button>
                <span class="sep"></span>
                <button class="seq-text on">Objects</button>
                <button class="seq-text">Colors</button>
            </div>
            <table>
                <colgroup><col class="c-num" /><col class="c-obj" /><col class="c-status" /><col /></colgroup>
                <thead><tr><th>#</th><th>Object</th><th class="status">Status</th><th></th></tr></thead>
                <tbody>
                    <tr class="gap"><td></td><td></td><td></td><td></td></tr>
                    <tr>
                        <td class="num">1</td>
                        <td class="thumb">
                            <svg viewBox="0 0 270 262">
                                <path d="M42 18q0-5 5-5h45q5 0 5 5v84h76V18q0-5 5-5h41q5 0 5 5v226q0 5-5 5h-41q-5 0-5-5v-90H97v88q0 5-5 5H47q-5 0-5-5z" fill="none" stroke="#a54a5c" stroke-width="2" />
                            </svg>
                        </td>
                        <td></td><td></td>
                    </tr>
                    {#each [2, 3, 4, 5] as row (row)}
                        <tr><td></td><td></td><td></td><td></td></tr>
                    {/each}
                </tbody>
            </table>
            <div class="seq-bar bottom">
                <span class="grip"></span>
                {#each ['first', 'up', 'down', 'last'] as name}
                    <button class="seq-icon" aria-label={name}>{@render icon(name)}</button>
                {/each}
                <span class="sep"></span>
                <button class="seq-icon" aria-label="Sequence by number">{@render icon('byNumber')}</button>
                <button class="seq-icon" aria-label="Sequence by selects">{@render icon('byBlock')}</button>
            </div>
        </section>

        <section class="properties">
            <header><h2>Object Properties</h2><button class="chevron" aria-label="Collapse">»</button></header>
            <div class="prop-tabs">
                <button>Appliqué</button>
                <button>Buttonhole</button>
                <button class="active">Lettering</button>
                <button>Fill</button>
                <button>Outline</button>
                <button class="cut-off">Effects</button>
                <span class="prop-scroll">
                    <svg viewBox="0 0 8 12"><path d="M7 1L1 6l6 5z" fill="#fff" stroke="#555" /></svg>
                    <svg viewBox="0 0 8 12"><path d="M0 0l8 6-8 6z" fill="#111" /></svg>
                </span>
            </div>
            <div class="prop-body">
                <label class="line" for="lettering">Enter text:</label>
                <textarea id="lettering"></textarea>
                <button class="insert">Insert Character...</button>
                <p class="line filter">Filter font by:</p>
                <div class="row select-row">
                    <label for="font-type">Type:</label>
                    <div class="drop"><select id="font-type"><option>Embroidery</option></select><svg viewBox="0 0 12 7"><path d="M1 1l5 5 5-5" /></svg></div>
                </div>
                <div class="row select-row">
                    <label for="truetype">TrueType</label>
                    <div class="drop disabled"><select id="truetype" disabled><option>All</option></select><svg viewBox="0 0 12 7"><path d="M1 1l5 5 5-5" /></svg></div>
                </div>
                <p class="line font-line">Font:</p>
                <button class="font-combo">
                    <svg class="zigzag" viewBox="0 0 20 20"><path d="M1 2l18 2L1 7l18 2L1 12l18 2L1 17l18 1" fill="none" stroke="#e5483d" stroke-width="1.500" /></svg>
                    <span class="font-name">Block2</span>
                    <span class="font-size">(&nbsp; 6 -&nbsp; 2...</span>
                    <span class="font-sample"><b>B</b><b>I</b><b>O</b><b>C</b></span>
                    <span class="font-arrow"><i class="caret"></i></span>
                </button>
                <label class="check"><input type="checkbox" checked />Preview</label>
                <div class="row height-row">
                    <label for="height">Height:</label>
                    {@render spinner('height', '10.00', 'mm')}
                </div>
                <p class="baseline-line">Baseline:</p>
                <div class="gallery baselines">
                    <div class="cells">
                        {#each baselines as art, i}
                            <button class="cell" class:picked={i === 0} aria-label={`Baseline ${i + 1}`}><svg viewBox="0 0 84 84">{@html art}</svg></button>
                        {/each}
                    </div>
                    <div class="scrollbar"><i class="scroll-end"><i class="caret flip"></i></i><i class="scroll-thumb"></i><i class="scroll-gap"></i><i class="scroll-end"><i class="caret"></i></i></div>
                </div>
                <div class="row art-row">
                    <span>Lettering Art:</span>
                    <button class="remove-art" disabled>Remove Art</button>
                </div>
                <div class="gallery arts">
                    <div class="cells">
                        {#each arts as art, i}
                            <div class="numbered">
                                <button class="cell" aria-label={`Art ${i + 1}`}><svg viewBox="0 0 84 84">{@html art}</svg></button>
                                <span>{i + 1}</span>
                            </div>
                        {/each}
                        {#each arts as _, i}
                            <button class="cell" aria-label={`Art ${i + 5}`}><svg viewBox="0 0 84 84"><path d="M24 16q18-5 34 0" fill="none" stroke="#9bb5b5" stroke-width="2" /></svg></button>
                        {/each}
                    </div>
                    <div class="art-scroll"><i class="caret flip small"></i><i class="caret small dark"></i><span><i class="caret small dark"></i></span></div>
                </div>
                <div class="row align-row">
                    <span>Alignment:</span>
                    {#each aligns as kind}
                        <button class="align" class:on={kind === 'center'} aria-label={kind}>
                            <svg viewBox="0 0 28 30">
                                {#each ragged as w, i}
                                    <path d={`M${lineX(kind, w)} ${1.5 + i * 3}h${lineW(kind, w)}`} stroke="#333" stroke-width="1.400" />
                                {/each}
                            </svg>
                        </button>
                    {/each}
                </div>
                <div class="row layout-row">
                    <span>Layouts:</span>
                    <button disabled aria-label="Two line layout"><svg viewBox="0 0 86 78"><text x="43" y="20">L1</text><text x="43" y="73">L2</text><path d="M28 34q15-21 30 0M28 43q15 21 30 0" /></svg></button>
                    <button disabled aria-label="Three line layout"><svg viewBox="0 0 86 78"><text x="43" y="20">L1</text><text x="43" y="46">L2</text><text x="43" y="73">L3</text><path d="M28 34q15-21 30 0M28 43q15 21 30 0M28 38h30" /></svg></button>
                </div>
                <button class="advanced"><svg viewBox="0 0 12 12"><path d="M12 0v12H0z" fill="#266a95" /></svg>Advanced</button>
                {#each spinners as s}
                    <div class="row spin-row">
                        <label for={s.id}>{s.label}</label>
                        {@render spinner(s.id, s.value, s.unit)}
                    </div>
                {/each}
                <p class="sequence-line">Letter sequence:</p>
                <div class="letter-sequence">
                    {#each sequences as art, i}
                        <button class:on={i === 0} aria-label={`Letter sequence ${i + 1}`}>
                            <svg viewBox="0 0 88 56"><g fill="none" stroke="#3a3a3a" stroke-width="2">{@html art}</g><text x="44" y="47">ABCD</text></svg>
                        </button>
                    {/each}
                </div>
                <div class="prop-foot"></div>
            </div>
        </section>

        <aside class="dock">
            {#each dock as tab}
                <button>{@render icon(tab.icon)}{tab.label}</button>
            {/each}
        </aside>
    </main>

    <div class="palette">
        <span class="grip"></span>
        <button class="swatch">1</button>
        <span class="sep"></span>
        {@render tools([{ icon: 'pick', label: 'Pick' }, { icon: 'apply', label: 'Apply' }, null])}
        <button class="swatch current"><span>1</span></button>
        <span class="spacer"></span>
        <span class="sep"></span>
        {@render tools([{ icon: 'add', label: 'Add' }, { icon: 'remove', label: 'Remove', off: true }, null, { icon: 'hide', label: 'Hide' }, { icon: 'discard', label: 'Discard', off: true }, null, { icon: 'spool', label: 'Threads' }])}
    </div>

    <footer>
        <span class="size">W&nbsp; 63.6 H&nbsp; 82.2</span>
        <span class="coords"><span>X=</span><span>0.7 Y=</span><span>0.3 L=</span><span>0.7 A=</span><span>27</span></span>
        <span class="count">187</span>
        <span class="fabric">Pure Cotton</span>
        <span class="grade">EMB Grade: A <svg viewBox="0 0 20 18"><path d="M10 17L2 9Q-1 3 4 1q4-1 6 3 2-4 6-3 5 2 2 8z" fill="#f00" /></svg></span>
    </footer>
</div>

<style>
    :global(body) {
        background: #ebebeb;
    }

    .window {
        display: flex;
        flex-direction: column;
        min-height: 100vh;
        font-family: "Open Sans", "Noto Sans", sans-serif;
        font-size: 17px;
        line-height: 22px;
        color: #3c3c3c;
        background: #ebebeb;
    }

    .window :global(*) {
        box-sizing: border-box;
    }

    button,
    input,
    select,
    textarea {
        font: inherit;
        color: inherit;
        border: none;
        border-radius: 0;
        padding: 0;
        margin: 0;
        background: none;
    }

    h2,
    p {
        margin: 0;
        font-size: 17px;
    }

    svg {
        display: block;
        flex: none;
    }

    .icon {
        width: 36px;
        height: 36px;
    }

    .menu {
        display: flex;
        gap: 29px;
        height: 40px;
        padding: 0 25px;
        background: #5ac7c9;
        border-top: 2px solid #d3eff2;
        font-weight: 600;
    }

    .toolbar-row {
        display: flex;
        height: 72px;
    }

    .main-row {
        height: 73px;
    }

    .toolbar {
        display: flex;
        align-items: center;
        padding: 0 3px 0 2px;
        border-right: 2px solid #cfcfcf;
        border-bottom: 2px solid #cfcfcf;
    }

    .toolbar:first-child {
        padding-left: 0;
    }

    .grip {
        flex: none;
        width: 8px;
        height: 60px;
        margin-right: 3px;
        background-image: radial-gradient(#bbb 1px, transparent 1px);
        background-size: 4px 4px;
    }

    .sep {
        flex: none;
        width: 2px;
        height: 66px;
        margin: 0 3px;
        border-left: 1px solid #cfcfcf;
        border-right: 1px solid #fafafa;
    }

    .tool {
        display: flex;
        flex-direction: column;
        align-items: center;
        justify-content: center;
        min-width: 68px;
        height: 68px;
        padding: 5px 7px 0;
        white-space: nowrap;
    }

    .more {
        padding-left: 12px;
        padding-right: 12px;
    }

    .tool-label {
        line-height: 24px;
    }

    .on {
        background: #c9dff2;
    }

    .off {
        color: #ababab;
    }

    .split {
        flex-direction: row;
        gap: 4px;
        padding: 5px 4px 0;
        min-width: 78px;
    }

    .split-main {
        display: flex;
        flex-direction: column;
        align-items: center;
    }

    .caret {
        display: inline-block;
        border: 5px solid transparent;
        border-top: 6px solid #666;
        border-bottom: none;
    }

    .caret.flip {
        transform: rotate(180deg);
    }

    .caret.small {
        border-width: 4px;
        border-top-width: 5px;
        border-bottom: none;
        vertical-align: middle;
    }

    .caret.dark {
        border-top-color: #222;
    }

    .tool-label .caret {
        margin: 0 0 6px 5px;
    }

    .combo {
        position: relative;
        display: flex;
        align-items: center;
        height: 34px;
        background: #fff;
        border: 2px solid #b5b5b5;
    }

    .combo::after {
        content: "";
        position: absolute;
        right: 7px;
        top: 13px;
        border: 5px solid transparent;
        border-top: 6px solid #666;
        border-bottom: none;
        pointer-events: none;
    }

    select {
        appearance: none;
        width: 100%;
        height: 100%;
        padding: 0 4px;
        opacity: 1;
    }

    .zoom-combo {
        width: 127px;
    }

    .percent {
        padding: 0 2px 0 6px;
    }

    .brand {
        width: 178px;
    }

    .needle {
        width: 144px;
    }

    .hoop-combo {
        width: 328px;
        color: #111;
        margin-right: 3px;
    }

    .hoop-glyph {
        width: 22px;
        height: 26px;
        margin: 0 6px 0 7px;
    }

    .metric {
        width: 88px;
    }

    .rotate {
        display: flex;
        align-items: center;
        gap: 7px;
        padding: 0 2px 0 4px;
        color: #999;
    }

    .rotate input {
        width: 43px;
        height: 42px;
        padding: 0 5px 12px;
        background: #fff;
    }

    main {
        flex: 1;
        display: grid;
        grid-template-columns: 350px 1fr 502px 462px 29px;
    }

    .toolboxes {
        display: flex;
        flex-direction: column;
        padding: 0 6px 5px 2px;
        background: #5ac7c9;
    }

    .toolboxes h2 {
        padding-left: 11px;
        line-height: 44px;
        font-weight: 600;
        font-size: 17px;
    }

    .toolbox-list {
        flex: 1;
        display: flex;
        flex-direction: column;
        gap: 3px;
        padding: 1px 2px;
        background: #ebebeb;
    }

    .category {
        display: flex;
        align-items: center;
        gap: 12px;
        height: 44px;
        padding: 0 11px;
        border: 2px solid #ababab;
        background: #f0f0f0;
        font-weight: 600;
    }

    .category svg {
        width: 10px;
        height: 16px;
    }

    .layout-tools {
        margin-bottom: 6px;
    }

    .tool-group {
        padding: 3px 0;
        border-top: 1px solid #a5a5a5;
    }

    .tool-group:first-child {
        padding-top: 0;
        border-top: none;
    }

    .tool-group:last-child {
        padding-bottom: 0;
    }

    .tool-group button {
        display: flex;
        align-items: center;
        gap: 11px;
        width: 100%;
        height: 45px;
        padding-left: 34px;
        white-space: nowrap;
    }

    .tool-group .off {
        color: #8c8c8c;
    }

    .workspace {
        display: flex;
        flex-direction: column;
        min-width: 0;
        background: #f0f0f0;
    }

    .doc-tabs {
        display: flex;
        align-items: center;
        height: 30px;
        padding: 3px 2px 0;
        font-size: 16px;
    }

    .doc-tab {
        height: 27px;
        padding: 0 6px 0 7px;
        border: 2px solid #b5b5b5;
        border-bottom: none;
        line-height: 22px;
        white-space: nowrap;
    }

    .close {
        margin-left: 6px;
        font-size: 18px;
        color: #222;
    }

    .doc-tab.active {
        background: #c9dff2;
        color: #3a4c60;
    }

    .tab-scroll {
        display: flex;
        gap: 13px;
        margin-left: auto;
        padding-right: 10px;
    }

    .tab-scroll svg {
        width: 8px;
        height: 12px;
        fill: #fff;
        stroke: #555;
    }

    .doc-frame {
        flex: 1;
        display: grid;
        grid-template-columns: 28px 1fr 30px;
        grid-template-rows: 28px 1fr 30px;
        border: 5px solid #c9dff2;
        box-shadow: inset 0 0 0 1px #fff, inset 0 1px 0 #aaa;
        outline: 1px solid #a5adb5;
        outline-offset: -1px;
        padding: 1px 0 0 2px;
    }

    .ruler-corner,
    .corner-mark {
        width: 28px;
        height: 28px;
    }

    .ruler-x {
        width: 100%;
        height: 28px;
    }

    .ruler-y {
        width: 28px;
        height: 100%;
    }

    .ruler-x line,
    .ruler-y line {
        stroke: #222;
        stroke-width: 2px;
    }

    .ruler-x text,
    .ruler-y text {
        font-family: "Liberation Sans", Arial, sans-serif;
        font-size: 17px;
        fill: #333;
    }

    .canvas {
        width: 100%;
        height: 100%;
        background: #c0c0c0;
    }

    .edge-right,
    .edge-bottom {
        display: flex;
        align-items: center;
        justify-content: center;
    }

    .edge-right i {
        width: 3px;
        height: 27px;
        background: #999;
    }

    .edge-bottom i {
        width: 27px;
        height: 3px;
        background: #999;
    }

    .sequence {
        display: flex;
        flex-direction: column;
        border-left: 6px solid #ccc;
        border-right: 6px solid #ccc;
    }

    .sequence header,
    .properties header {
        display: flex;
        justify-content: space-between;
        align-items: center;
        height: 39px;
        padding: 0 10px 0 9px;
        background: #f0f0f0;
    }

    h2 {
        font-weight: 600;
    }

    .chevron {
        font-size: 24px;
        font-weight: 700;
        color: #111;
        padding-bottom: 4px;
    }

    .seq-bar {
        display: flex;
        align-items: center;
        align-self: flex-start;
        height: 50px;
        padding: 0 4px 0 1px;
        border: 2px solid #cfcfcf;
    }

    .seq-bar .grip,
    .seq-bar .sep {
        height: 44px;
    }

    .seq-icon {
        display: flex;
        align-items: center;
        justify-content: center;
        width: 45px;
        height: 46px;
    }

    .seq-icon .icon {
        width: 36px;
        height: 36px;
    }

    .seq-text {
        height: 46px;
        padding: 0 6px;
    }

    .seq-bar.bottom {
        margin-top: auto;
    }

    table {
        margin-left: 8px;
        width: 472px;
        table-layout: fixed;
        border-collapse: collapse;
        color: #222;
    }

    .c-num {
        width: 54px;
    }

    .c-obj {
        width: 273px;
    }

    .c-status {
        width: 57px;
    }

    th {
        height: 40px;
        padding: 5px 6px 0 0;
        font-weight: 400;
        font-size: 16px;
        border-bottom: 3px solid #808080;
    }

    tbody {
        background: #fff;
        border-left: 3px solid #808080;
    }

    td {
        height: 270px;
        padding: 0;
        border-bottom: 1px solid #a9a9a9;
        text-align: center;
    }

    .gap td {
        height: 5px;
    }

    td:nth-child(n + 3) {
        border-left: 2px solid #b5b5b5;
    }

    .thumb svg {
        width: 270px;
        height: 262px;
        border: 2px solid #8c8c8c;
    }

    .properties {
        display: flex;
        flex-direction: column;
        min-width: 0;
        padding-right: 12px;
        background: #f0f0f0;
        font-size: 16px;
        color: #2a2a2a;
    }

    .properties header {
        height: 51px;
        padding: 0 2px 10px 9px;
        color: #3c3c3c;
    }

    .prop-tabs {
        display: flex;
        align-items: center;
        height: 30px;
        padding-left: 12px;
        font-size: 15px;
        color: #4a4a4a;
    }

    .prop-tabs button {
        height: 26px;
        padding: 0 8px;
        border-right: 2px solid #777;
    }

    .prop-tabs button:nth-child(2) {
        padding-right: 6px;
        border-right-color: #f0f0f0;
    }

    .prop-tabs .active {
        height: 30px;
        background: #c9dff2;
        border-right: 3px solid #777;
    }

    .prop-tabs .cut-off {
        width: 32px;
        overflow: hidden;
        border: none;
        padding-right: 0;
        text-align: left;
    }

    .prop-scroll {
        display: flex;
        gap: 13px;
        margin: 0 7px 10px auto;
    }

    .prop-scroll svg {
        width: 8px;
        height: 12px;
    }

    .prop-body {
        flex: 1;
        display: flex;
        flex-direction: column;
        align-items: flex-start;
        margin: 0 0 10px 11px;
        padding-left: 8px;
        border: 4px solid #c9dff2;
        box-shadow: 2px 2px 0 #7d8894;
    }

    .prop-body p {
        font-size: 16px;
    }

    .line {
        line-height: 30px;
        padding-left: 2px;
    }

    textarea {
        width: 411px;
        height: 109px;
        resize: none;
        background: #fff;
        border-top: 3px solid #808080;
        border-left: 2px solid #808080;
    }

    .insert {
        width: 184px;
        height: 29px;
        margin-top: 7px;
        border: 2px solid #a5a5a5;
        line-height: 22px;
        color: #444;
    }

    .prop-body .filter {
        margin-top: 6px;
    }

    .row {
        display: flex;
        align-items: center;
    }

    .select-row {
        height: 38px;
        padding-left: 8px;
    }

    .row label,
    .row > span:first-child {
        padding: 0 0 4px 2px;
    }

    .select-row label {
        width: 127px;
        padding-bottom: 8px;
    }

    .drop {
        position: relative;
        width: 272px;
        height: 30px;
        border: 1px solid #bdbdbd;
        background: #fff;
        font-size: 16px;
    }

    .drop svg {
        position: absolute;
        right: 6px;
        top: 11px;
        width: 12px;
        height: 7px;
        fill: none;
        stroke: #555;
    }

    .drop.disabled {
        height: 28px;
        background: #f0f0f0;
        border-color: #f7f7f7;
        color: #888;
    }

    .drop.disabled svg {
        stroke: #bbb;
    }

    .prop-body .font-line {
        line-height: 26px;
    }

    .font-combo {
        display: flex;
        align-items: center;
        width: 405px;
        height: 50px;
        margin: 6px 0 0 3px;
        border: 2px solid #b5b5b5;
        background: #fff;
        color: #555;
    }

    .zigzag {
        width: 20px;
        height: 20px;
        margin: 0 13px 0 5px;
    }

    .font-name {
        width: 119px;
        text-align: left;
        padding-bottom: 8px;
    }

    .font-size {
        width: 80px;
        text-align: left;
        white-space: nowrap;
    }

    .font-sample {
        display: flex;
        flex: 1;
        gap: 13px;
        min-width: 0;
        overflow: hidden;
        font-family: "Liberation Sans", Arial, sans-serif;
        font-size: 43px;
        line-height: 46px;
        color: #333;
        -webkit-text-stroke: 3px #333;
    }

    .font-arrow {
        display: flex;
        align-items: center;
        justify-content: center;
        width: 24px;
        height: 46px;
        border-left: 1px solid #b5b5b5;
    }

    .check {
        display: flex;
        align-items: center;
        gap: 4px;
        height: 45px;
        padding-left: 3px;
    }

    .check input {
        width: 19px;
        height: 19px;
        accent-color: #005fb8;
    }

    .height-row {
        height: 34px;
    }

    .height-row label,
    .spin-row label {
        width: 186px;
    }

    .spinner {
        display: flex;
        width: 111px;
        height: 30px;
        border-bottom: 2px solid #999;
        background: #fff;
    }

    .spinner input {
        width: 84px;
        height: 28px;
        padding: 0 8px;
    }

    .spin-buttons {
        display: flex;
        flex-direction: column;
        gap: 1px;
        width: 27px;
        padding: 1px 2px 1px 1px;
        border: 2px solid #b5b5b5;
        border-bottom: none;
    }

    .spin-buttons button {
        display: flex;
        align-items: center;
        justify-content: center;
        flex: 1;
        border-bottom: 1px solid #ccc;
    }

    .spin-buttons svg {
        width: 8px;
        height: 5px;
        fill: #222;
    }

    .unit {
        padding-left: 3px;
    }

    .prop-body .baseline-line {
        line-height: 20px;
        padding-left: 2px;
        margin-bottom: 10px;
    }

    .gallery {
        display: flex;
        justify-content: space-between;
        width: 404px;
        border: 1px solid #c5c5c5;
        background: #ebebeb;
        overflow: hidden;
    }

    .baselines {
        height: 154px;
    }

    .arts {
        height: 151px;
    }

    .cells {
        display: grid;
        grid-template-columns: repeat(4, 84px);
        column-gap: 6px;
        row-gap: 6px;
        align-content: start;
        margin: 7px 0 3px 6px;
        overflow: hidden;
    }

    .arts .cells {
        row-gap: 9px;
    }

    .cell {
        width: 84px;
        height: 84px;
        border: 2px solid #b5b5b5;
    }

    .cell svg {
        width: 80px;
        height: 80px;
        fill: #118088;
        font-family: "DejaVu Serif Condensed", "DejaVu Serif", serif;
        font-weight: 700;
    }

    .cell.picked {
        border-color: #b0c9e2;
        background: #e6edf3;
    }

    .numbered {
        display: flex;
        flex-direction: column;
        align-items: center;
        gap: 5px;
        font-size: 16px;
    }

    .numbered span {
        line-height: 23px;
    }

    .scrollbar {
        display: flex;
        flex-direction: column;
        width: 26px;
    }

    .scroll-end {
        display: flex;
        align-items: center;
        justify-content: center;
        height: 26px;
        background: #fff;
        border: 1px solid #aaa;
    }

    .scroll-thumb {
        height: 84px;
        background: #fff;
        border: 1px solid #aaa;
    }

    .scroll-gap {
        flex: 1;
    }

    .art-scroll {
        display: flex;
        flex-direction: column;
        align-items: center;
        width: 28px;
        gap: 25px;
        padding-top: 12px;
    }

    .art-scroll .flip {
        border-top-color: #aaa;
    }

    .art-scroll span {
        display: flex;
        margin-top: 25px;
        padding-top: 2px;
        border-top: 2px solid #777;
    }

    .art-row {
        justify-content: space-between;
        width: 390px;
        height: 60px;
    }

    .remove-art {
        width: 178px;
        height: 34px;
        background: #fdfdfd;
        border: 1px solid #e5e5e5;
        color: #999;
    }

    .align-row {
        gap: 14px;
        height: 64px;
    }

    .align-row span,
    .layout-row span {
        width: 107px;
    }

    .align {
        display: flex;
        align-items: center;
        justify-content: center;
        width: 49px;
        height: 42px;
        border: 2px solid #adadad;
    }

    .align svg {
        width: 28px;
        height: 30px;
    }

    .layout-row {
        gap: 10px;
        height: 82px;
    }

    .layout-row span {
        width: 112px;
        margin-bottom: 30px;
    }

    .layout-row button {
        width: 88px;
        height: 80px;
        background: #fdfdfd;
        border: 1px solid #e5e5e5;
    }

    .layout-row svg {
        width: 86px;
        height: 78px;
        font-family: "DejaVu Serif Condensed", "DejaVu Serif", serif;
        font-style: italic;
        font-size: 21px;
        fill: #888;
    }

    .layout-row text {
        text-anchor: middle;
    }

    .layout-row path {
        fill: none;
        stroke: #888;
        stroke-width: 1px;
    }

    .advanced {
        display: flex;
        align-items: center;
        gap: 12px;
        align-self: stretch;
        height: 37px;
        margin: 17px 5px 7px -5px;
        padding: 0 10px;
        border: 2px solid #b5b5b5;
        font-weight: 600;
        font-size: 17px;
        color: #3c3c3c;
    }

    .advanced svg {
        width: 12px;
        height: 12px;
    }

    .spin-row {
        height: 41px;
    }

    .prop-body .sequence-line {
        line-height: 40px;
        padding-left: 2px;
    }

    .letter-sequence {
        display: flex;
        gap: 8px;
        padding-left: 12px;
    }

    .letter-sequence button {
        width: 89px;
        height: 57px;
        border: 2px solid #b5b5b5;
    }

    .letter-sequence svg {
        width: 85px;
        height: 53px;
        font-family: "DejaVu Serif Condensed", "DejaVu Serif", serif;
        font-weight: 700;
        font-size: 27px;
        fill: #118088;
    }

    .letter-sequence text {
        text-anchor: middle;
    }

    .prop-foot {
        flex: 1;
        align-self: stretch;
        margin: 25px 0 0 -8px;
        background: #ebebeb;
    }

    .dock {
        display: flex;
        flex-direction: column;
        gap: 21px;
        padding-top: 4px;
        background: #f0f0f0;
        font-family: "Liberation Sans", Arial, sans-serif;
        font-size: 18px;
    }

    .dock button {
        display: flex;
        align-items: center;
        gap: 5px;
        width: 29px;
        padding: 8px 0;
        writing-mode: vertical-rl;
        white-space: nowrap;
        background: #c9dff2;
        border: 1px solid #aab4be;
        border-right: none;
        border-radius: 5px 0 0 5px;
    }

    .dock .icon {
        width: 24px;
        height: 24px;
    }

    .palette {
        display: flex;
        align-items: center;
        height: 73px;
        padding-right: 4px;
        border-top: 2px solid #d2d2d2;
    }

    .swatch {
        width: 48px;
        height: 48px;
        background: #ab2430;
        color: #fff;
        font-size: 16px;
    }

    .current {
        display: flex;
        align-items: center;
        justify-content: center;
        background: linear-gradient(#00f, #00f) 33px 3px / 12px 11px no-repeat #000;
    }

    .current span {
        width: 34px;
        height: 36px;
        border: 3px solid #fff;
        line-height: 30px;
        background: linear-gradient(#00f, #00f) right top / 9px 7px no-repeat #ab2430;
    }

    .palette .tool {
        padding-top: 3px;
    }

    .spacer {
        flex: 1;
    }

    footer {
        display: flex;
        align-items: center;
        justify-content: flex-end;
        height: 30px;
        background: #266a95;
        border-top: 1px solid #5d7d95;
        color: #e6eff5;
        white-space: nowrap;
    }

    .size {
        width: 156px;
    }

    .coords {
        display: flex;
        gap: 14px;
        width: 307px;
    }

    .count {
        width: 80px;
    }

    .fabric {
        width: 247px;
    }

    .grade {
        display: flex;
        align-items: center;
        gap: 5px;
        width: 175px;
    }

    .grade svg {
        width: 20px;
        height: 18px;
    }
</style>
